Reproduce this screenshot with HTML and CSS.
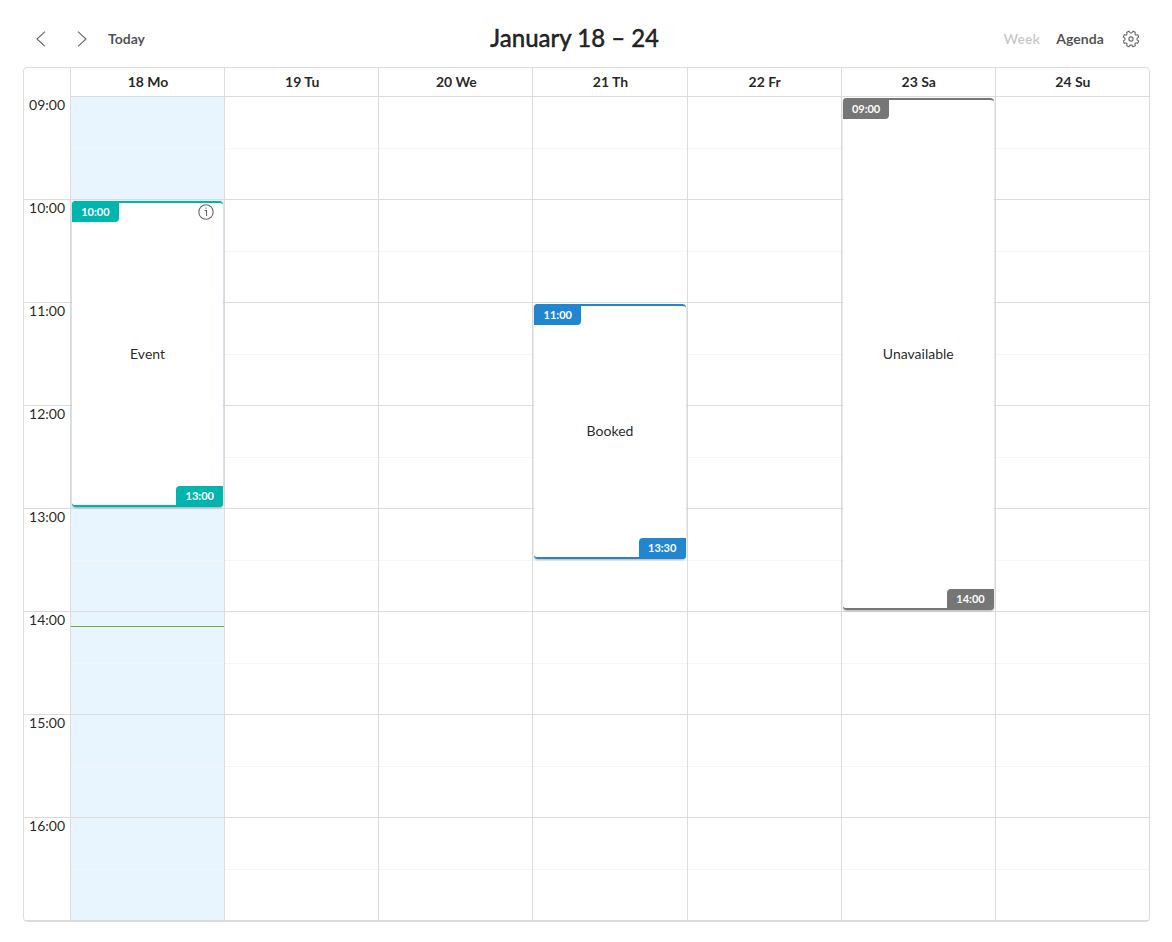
FILE: index.html
```html
<!DOCTYPE html>
<html lang="en">
<head>
<meta charset="utf-8">
<title>Calendar</title>
<link rel="stylesheet" href="styles.css">
</head>
<body>
<header class="toolbar">
  <nav class="nav">
    <svg class="arrow" viewBox="0 0 10 16"><path d="M9 .7 1 8l8 7.300"/></svg>
    <svg class="arrow" viewBox="0 0 10 16"><path d="M1 .7 9 8l-8 7.300"/></svg>
    <span class="today">Today</span>
  </nav>
  <h1 class="title">January 18 – 24</h1>
  <div class="views">
    <span class="view view-active">Week</span>
    <span class="view">Agenda</span>
    <svg class="gear" viewBox="0 0 18 18"><path d="M7 1.300 Q9 5 11 1.300 L13.300 2.300 Q12 6 15.700 4.700 L16.700 7 Q13 9 16.700 11 L15.700 13.300 Q12 12 13.300 15.700 L11 16.700 Q9 13 7 16.700 L4.700 15.700 Q6 12 2.300 13.300 L1.300 11 Q5 9 1.300 7 L2.300 4.700 Q6 6 4.700 2.300 Z"/><circle cx="9" cy="9" r="2.100"/></svg>
  </div>
</header>
<main class="calendar">
  <div class="hours">
    <div class="corner"></div>
    <div class="hour">09:00</div><div class="hour">10:00</div><div class="hour">11:00</div><div class="hour">12:00</div><div class="hour">13:00</div><div class="hour">14:00</div><div class="hour">15:00</div><div class="hour">16:00</div>
  </div>
  <section class="day day-current">
    <h2 class="day-name">18 Mo</h2>
    <div class="slots">
      <div class="slot"></div><div class="slot"></div><div class="slot"></div><div class="slot"></div><div class="slot"></div><div class="slot"></div><div class="slot"></div><div class="slot"></div>
      <article class="event event-teal">
        <span class="tag tag-start">10:00</span>
        <svg class="info" viewBox="0 0 16 16"><circle cx="8" cy="8" r="7.200"/><path d="M6.500 6.500H8.500V12M8 3.500v1.300"/></svg>
        Event
        <span class="tag tag-end">13:00</span>
      </article>
      <div class="now"></div>
    </div>
  </section>
  <section class="day">
    <h2 class="day-name">19 Tu</h2>
    <div class="slots"><div class="slot"></div><div class="slot"></div><div class="slot"></div><div class="slot"></div><div class="slot"></div><div class="slot"></div><div class="slot"></div><div class="slot"></div></div>
  </section>
  <section class="day">
    <h2 class="day-name">20 We</h2>
    <div class="slots"><div class="slot"></div><div class="slot"></div><div class="slot"></div><div class="slot"></div><div class="slot"></div><div class="slot"></div><div class="slot"></div><div class="slot"></div></div>
  </section>
  <section class="day">
    <h2 class="day-name">21 Th</h2>
    <div class="slots">
      <div class="slot"></div><div class="slot"></div><div class="slot"></div><div class="slot"></div><div class="slot"></div><div class="slot"></div><div class="slot"></div><div class="slot"></div>
      <article class="event event-blue">
        <span class="tag tag-start">11:00</span>
        Booked
        <span class="tag tag-end">13:30</span>
      </article>
    </div>
  </section>
  <section class="day">
    <h2 class="day-name">22 Fr</h2>
    <div class="slots"><div class="slot"></div><div class="slot"></div><div class="slot"></div><div class="slot"></div><div class="slot"></div><div class="slot"></div><div class="slot"></div><div class="slot"></div></div>
  </section>
  <section class="day">
    <h2 class="day-name">23 Sa</h2>
    <div class="slots">
      <div class="slot"></div><div class="slot"></div><div class="slot"></div><div class="slot"></div><div class="slot"></div><div class="slot"></div><div class="slot"></div><div class="slot"></div>
      <article class="event event-grey">
        <span class="tag tag-start">09:00</span>
        Unavailable
        <span class="tag tag-end">14:00</span>
      </article>
    </div>
  </section>
  <section class="day">
    <h2 class="day-name">24 Su</h2>
    <div class="slots"><div class="slot"></div><div class="slot"></div><div class="slot"></div><div class="slot"></div><div class="slot"></div><div class="slot"></div><div class="slot"></div><div class="slot"></div></div>
  </section>
</main>
</body>
</html>
```
FILE: styles.css
```css
* { box-sizing: border-box; }
body {
  margin: 0;
  padding: 10px 22px 0 23px;
  background: #fff;
  color: rgba(0, 0, 0, .87);
  font: 14px/20px Lato, sans-serif;
}
svg { fill: none; stroke: #666; stroke-width: 1.1; }
.toolbar {
  display: grid;
  grid-template-columns: 288px 1fr 312px;
  align-items: center;
  height: 57px;
}
.nav, .views { display: flex; align-items: center; font-weight: 700; color: rgba(0, 0, 0, .7); }
.nav { padding-left: 13px; gap: 31px; }
.arrow { width: 10px; height: 16px; }
.today { margin-left: -10px; }
.title {
  margin: 0;
  padding-bottom: 2px;
  text-align: center;
  font-size: 24px;
  font-weight: 500;
  line-height: 30px;
  -webkit-text-stroke: .4px;
}
.views { justify-content: flex-end; gap: 16px; padding-right: 10px; }
.view { letter-spacing: .07px; }
.view-active { color: rgba(0, 0, 0, .22); }
.gear { width: 18px; height: 18px; margin-left: 2px; }

.calendar {
  display: grid;
  grid-template-columns: 46px repeat(7, minmax(0, 1fr));
  border: 1px solid #dcdcdd;
  border-radius: 4px;
}
.corner { height: 29px; }
.hour {
  height: 103px;
  padding-right: 5px;
  border-bottom: 1px solid #dcdcdd;
  text-align: right;
  line-height: 16px;
}
.day { border-left: 1px solid #dcdcdd; }
.day-name {
  margin: 0;
  height: 29px;
  padding-left: 1px;
  border-bottom: 1px solid #dcdcdd;
  text-align: center;
  font-size: 14px;
  font-weight: 700;
  line-height: 28px;
}
.slots { position: relative; }
.slot { height: 103px; border-bottom: 1px solid #dcdcdd; }
.slot::before { content: ""; display: block; height: 51px; border-bottom: 1px solid #f5f5f5; }
.day-current .slots { background: #e8f5ff; }

.event {
  position: absolute;
  left: 1px;
  right: 1px;
  display: flex;
  align-items: center;
  justify-content: center;
  background: #fff;
  border: solid var(--tone);
  border-width: 2px 0;
  border-radius: 4px;
  box-shadow: 0 1px 2px rgba(34, 36, 38, .35);
}
.event-teal { --tone: #00b5ad; top: 104px; height: 306px; }
.event-blue { --tone: #2185d0; top: 207px; height: 255px; padding-bottom: 1px; }
.event-grey { --tone: #767676; top: 1px; height: 512px; }
.tag {
  position: absolute;
  padding: 0 9.2px;
  background: var(--tone);
  color: #fff;
  font-size: 11px;
  font-weight: 700;
  line-height: 21px;
}
.tag-start { top: -2px; left: 0; border-radius: 4px 0 4px 0; }
.tag-end { bottom: -2px; right: 0; padding-bottom: 1px; line-height: 20px; border-radius: 4px 0 4px 0; }
.info { position: absolute; top: 1px; right: 9px; width: 16px; height: 16px; }
.now { position: absolute; top: 529px; left: 0; right: 0; height: 1px; background: #6cab36; }
```
